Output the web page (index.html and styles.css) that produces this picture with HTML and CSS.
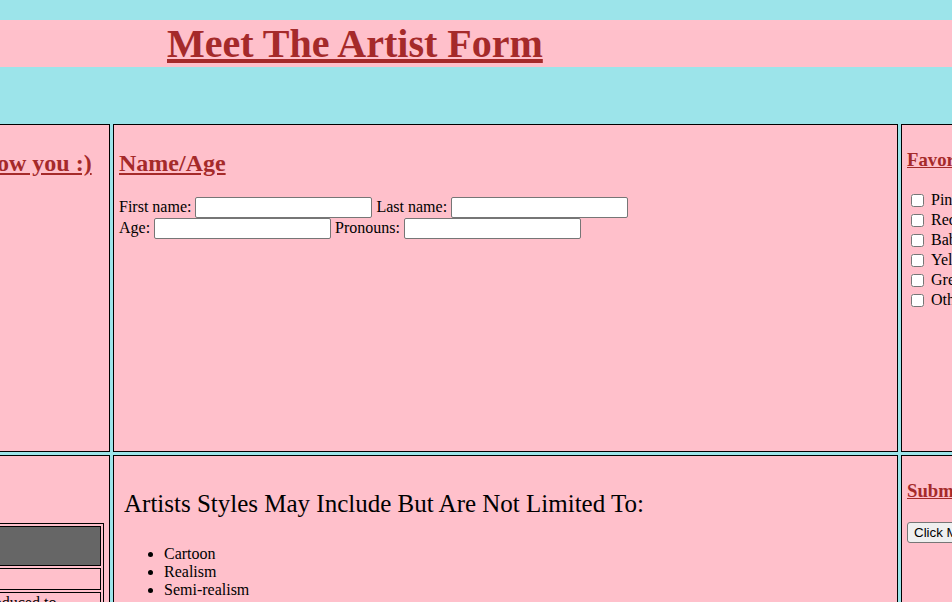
FILE: index.html
```html
<!DOCTYPE html>
<html lang="en">
<head>
<meta charset="utf-8">
<title>Meet The Artist Form</title>
<link rel="stylesheet" href="styles.css">
</head>
<body>
<h1 class="title">Meet The Artist Form</h1>
<div class="board">
  <section class="cell">
    <h2 class="heading">Let's get to know you :)</h2>
  </section>
  <section class="cell">
    <h2 class="heading">Name/Age</h2>
    <form class="name-form">First name: <input class="field" type="text"> Last name: <input class="field" type="text"><br>Age: <input class="field" type="text"> Pronouns: <input class="field" type="text"></form>
  </section>
  <section class="cell">
    <h3 class="subheading">Favorite Colors</h3>
    <div class="checks">
      <label class="check-row"><input class="check" type="checkbox"> Pink</label>
      <label class="check-row"><input class="check" type="checkbox"> Red</label>
      <label class="check-row"><input class="check" type="checkbox"> Baby Blue</label>
      <label class="check-row"><input class="check" type="checkbox"> Yellow</label>
      <label class="check-row"><input class="check" type="checkbox"> Green</label>
      <label class="check-row"><input class="check" type="checkbox"> Other</label>
    </div>
  </section>
  <section class="cell">
    <h3 class="subheading">About</h3>
    <table class="mini">
      <tr><td class="mini-head"></td></tr>
      <tr><td class="mini-cell">Artist</td></tr>
      <tr><td class="mini-cell">So how were you introduced to drawing? Tell us a little about it.</td></tr>
    </table>
  </section>
  <section class="cell">
    <div class="styles">
      <h2 class="styles-head">Artists Styles May Include But Are Not Limited To:</h2>
      <ul class="style-list">
        <li>Cartoon</li>
        <li>Realism</li>
        <li>Semi-realism</li>
        <li>Anime</li>
        <li>Abstract</li>
      </ul>
    </div>
  </section>
  <section class="cell">
    <h3 class="subheading">Submit</h3>
    <button class="btn" type="button">Click Me</button>
  </section>
</div>
</body>
</html>
```

FILE: styles.css
```css
html {
  background: #9ce4ea;
}

body {
  margin: 0;
  overflow: hidden;
  font-family: "Liberation Serif", "Times New Roman", serif;
  font-size: 16px;
  color: #000;
}

.title {
  margin: 20px 0 57px;
  padding-left: 167px;
  background: #ffc0cb;
  color: #a52a2a;
  font-size: 40px;
  line-height: 47px;
  font-weight: bold;
  text-decoration: underline;
  white-space: nowrap;
}

.board {
  display: grid;
  grid-template-columns: 265px 785px 300px;
  grid-template-rows: 328px 320px;
  gap: 3px;
  margin-left: -155px;
}

.cell {
  box-sizing: border-box;
  border: 1px solid #000;
  padding: 5px;
  background: #ffc0cb;
  min-width: 0;
}

.heading {
  margin: 19.92px 0;
  font-size: 24px;
  font-weight: bold;
  color: #a52a2a;
  text-decoration: underline;
  white-space: nowrap;
}

.subheading {
  margin: 18.72px 0;
  font-size: 18.72px;
  font-weight: bold;
  color: #a52a2a;
  text-decoration: underline;
  white-space: nowrap;
}

.name-form {
  margin: 0;
}

.field {
  box-sizing: border-box;
  width: 177px;
  height: 21px;
  padding: 1px 2px;
  border: 1px solid #767676;
  border-radius: 2px;
  background: #fff;
  font-family: "Liberation Sans", Arial, sans-serif;
  font-size: 13.33px;
  vertical-align: baseline;
}

.checks {
  padding-top: 1px;
}

.check-row {
  display: flex;
  align-items: center;
  height: 20px;
  white-space: nowrap;
}

.check {
  flex: none;
  width: 13px;
  height: 13px;
  margin: 0 7px 0 4px;
}

.mini {
  width: 100%;
  margin-top: 21px;
  border: 1px solid #000;
  border-spacing: 2px;
}

.mini-head {
  height: 36px;
  padding: 1px;
  border: 1px solid #000;
  background: #666;
}

.mini-cell {
  padding: 1px;
  border: 1px solid #000;
}

.styles {
  padding-left: 5px;
}

.styles-head {
  margin: 29px 0 0;
  font-size: 25px;
  font-weight: normal;
  white-space: nowrap;
}

.style-list {
  margin: 27px 0 0;
  padding-left: 40px;
}

.btn {
  margin: 2px 0 0;
  padding: 1px 6px;
  height: 21px;
  border: 1px solid #767676;
  border-radius: 3px;
  background: #efefef;
  color: #000;
  font-family: "Liberation Sans", Arial, sans-serif;
  font-size: 13.33px;
}
```
